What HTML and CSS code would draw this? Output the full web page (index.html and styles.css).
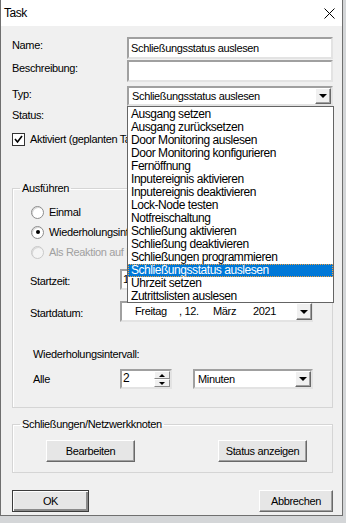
FILE: index.html
```html
<!DOCTYPE html>
<html lang="de">

<head>
    <meta charset="UTF-8">
    <title>Task</title>
    <link rel="stylesheet" href="styles.css">
</head>

<body>
    <div class="window">
        <div class="titlebar">
            <span class="title">Task</span>
            <svg class="close" width="11" height="11" viewBox="0 0 11 11">
                <path d="M0.5 0.5 L10.5 10.5 M10.5 0.5 L0.5 10.5" stroke="#000" stroke-width="1" fill="none"/>
            </svg>
        </div>

        <div class="content">
            <div class="field-row row-name">
                <span class="label">Name:</span>
                <div class="textbox">Schließungsstatus auslesen</div>
            </div>
            <div class="field-row row-desc">
                <span class="label">Beschreibung:</span>
                <div class="textbox"></div>
            </div>
            <div class="field-row row-type">
                <span class="label">Typ:</span>
                <div class="combo type-combo">
                    <span class="combo-text">Schließungsstatus auslesen</span>
                    <span class="arrow-btn"><i class="tri"></i></span>
                </div>
            </div>
            <div class="status">Status:</div>
            <div class="check-row">
                <span class="checkbox">
                    <svg width="9" height="9" viewBox="0 0 9 9"><path d="M1 4 L3.5 7 L8 1" stroke="#000" stroke-width="1.6" fill="none"/></svg>
                </span>
                <span>Aktiviert (geplanten Task ausführen)</span>
            </div>

            <fieldset class="group run">
                <legend>Ausführen</legend>
                <div class="group-body run-body">
                    <div class="radio-row first">
                        <span class="radio"></span>
                        <span>Einmal</span>
                    </div>
                    <div class="radio-row">
                        <span class="radio checked"><i></i></span>
                        <span>Wiederholungsintervall</span>
                    </div>
                    <div class="radio-row disabled">
                        <span class="radio"></span>
                        <span>Als Reaktion auf Ereignis</span>
                    </div>

                    <div class="pick-row start-time">
                        <span class="pick-label">Startzeit:</span>
                        <div class="picker">
                            <span class="pick-text">14:00:00</span>
                        </div>
                    </div>
                    <div class="pick-row start-date">
                        <span class="pick-label">Startdatum:</span>
                        <div class="picker">
                            <span class="d-day">Freitag</span>
                            <span class="d-num">, 12.</span>
                            <span class="d-month">März</span>
                            <span class="d-year">2021</span>
                            <span class="arrow-btn date-btn"><i class="tri"></i></span>
                        </div>
                    </div>

                    <div class="interval-title">Wiederholungsintervall:</div>
                    <div class="interval-row">
                        <span class="interval-label">Alle</span>
                        <div class="spinner">
                            <span class="spin-text">2</span>
                            <span class="spin-btns">
                                <span class="spin-btn"><i class="tri up"></i></span>
                                <span class="spin-btn"><i class="tri small"></i></span>
                            </span>
                        </div>
                        <div class="combo unit-combo">
                            <span class="combo-text">Minuten</span>
                            <span class="arrow-btn"><i class="tri"></i></span>
                        </div>
                    </div>
                </div>
            </fieldset>

            <fieldset class="group nodes">
                <legend>Schließungen/Netzwerkknoten</legend>
                <div class="group-body nodes-body">
                    <button class="btn">Bearbeiten</button>
                    <button class="btn">Status anzeigen</button>
                </div>
            </fieldset>

            <div class="footer">
                <button class="btn default ok">OK</button>
                <button class="btn cancel">Abbrechen</button>
            </div>
        </div>

        <ul class="droplist">
            <li>Ausgang setzen</li>
            <li>Ausgang zurücksetzen</li>
            <li>Door Monitoring auslesen</li>
            <li>Door Monitoring konfigurieren</li>
            <li>Fernöffnung</li>
            <li>Inputereignis aktivieren</li>
            <li>Inputereignis deaktivieren</li>
            <li>Lock-Node testen</li>
            <li>Notfreischaltung</li>
            <li>Schließung aktivieren</li>
            <li>Schließung deaktivieren</li>
            <li>Schließungen programmieren</li>
            <li class="selected">Schließungsstatus auslesen</li>
            <li>Uhrzeit setzen</li>
            <li>Zutrittslisten auslesen</li>
        </ul>
    </div>
</body>

</html>
```

FILE: styles.css
```css
* {
    box-sizing: border-box;
}

body {
    margin: 0;
    background: #d4d6d8;
    font-family: "Liberation Sans", Arial, sans-serif;
    font-size: 11px;
    letter-spacing: -0.35px;
    line-height: 13px;
    color: #000;
}

.window {
    position: relative;
    width: 343px;
    height: 516px;
    background: #f0f0f0;
    border-left: 1px solid #6f6f6f;
    border-right: 1px solid #6f6f6f;
    border-bottom: 1px solid #6f6f6f;
}

.titlebar {
    height: 26px;
    background: #fff;
    display: flex;
    align-items: center;
    justify-content: space-between;
    padding: 0 7px 0 3px;
}

.title {
    font-size: 12px;
    letter-spacing: -0.5px;
}

.close {
    display: block;
}

.content {
    padding: 11px 9px 0 11px;
}

.field-row {
    display: flex;
    align-items: flex-start;
}

.label {
    width: 115px;
    padding-top: 2px;
}

.row-desc {
    margin-top: 1px;
}

.row-type {
    margin-top: 4px;
}

.textbox {
    width: 206px;
    height: 22px;
    background: #fff;
    border: 2px solid;
    border-color: #a0a0a0 #e3e3e3 #e3e3e3 #a0a0a0;
    padding: 3px 2px 0;
    white-space: nowrap;
    overflow: hidden;
}

.combo {
    position: relative;
    display: flex;
    align-items: center;
    justify-content: space-between;
    background: #fff;
    border: 2px solid;
    border-color: #a0a0a0 #e3e3e3 #e3e3e3 #a0a0a0;
    padding-left: 3px;
}

.type-combo {
    width: 206px;
    height: 20px;
}

.arrow-btn {
    width: 16px;
    height: 16px;
    display: flex;
    align-items: center;
    justify-content: center;
    background: #f0f0f0;
    border: 1px solid;
    border-color: #fff #696969 #696969 #fff;
    box-shadow: inset -1px -1px 0 #a0a0a0;
}

.tri {
    width: 0;
    height: 0;
    border-left: 4px solid transparent;
    border-right: 4px solid transparent;
    border-top: 4px solid #000;
}

.tri.up {
    border-top: none;
    border-bottom: 3px solid #000;
    border-left-width: 3px;
    border-right-width: 3px;
}

.tri.small {
    border-top-width: 3px;
    border-left-width: 3px;
    border-right-width: 3px;
}

.status {
    margin-top: 3px;
    height: 13px;
}

.check-row {
    margin-top: 10px;
    height: 14px;
    display: flex;
    align-items: center;
    gap: 5px;
    white-space: nowrap;
}

.checkbox {
    width: 13px;
    height: 13px;
    background: #fff;
    border: 1px solid #333;
    display: flex;
    align-items: center;
    justify-content: center;
}

.group {
    margin: 0;
    padding: 0;
    border: 1px solid #d5d5d5;
    box-shadow: inset 1px 1px 0 #fff;
    min-width: 0;
}

.group legend {
    padding: 0 2px;
    margin-left: 7px;
    line-height: 13px;
}

.run {
    margin-top: 36px;
}

.run-body {
    padding: 0 0 18px 18px;
}

.radio-row {
    display: flex;
    align-items: center;
    gap: 5px;
    height: 14px;
    margin-top: 6px;
    white-space: nowrap;
}

.radio-row.first {
    margin-top: 10px;
}

.radio-row.disabled {
    color: #a0a0a0;
}

.radio {
    width: 13px;
    height: 13px;
    border-radius: 50%;
    background: #fff;
    border: 1px solid #8c8c8c;
    box-shadow: inset 1px 1px 0 #d8d8d8;
    display: flex;
    align-items: center;
    justify-content: center;
}

.disabled .radio {
    border-color: #c8c8c8;
    background: #f4f4f4;
}

.radio.checked i {
    width: 4px;
    height: 4px;
    border-radius: 50%;
    background: #000;
}

.pick-row {
    display: flex;
    align-items: center;
}

.start-time {
    margin-top: 10px;
}

.start-date {
    margin-top: 11px;
}

.pick-label {
    width: 90px;
    margin-left: -1px;
    padding-top: 3px;
}

.picker {
    position: relative;
    display: flex;
    align-items: center;
    width: 193px;
    height: 21px;
    background: #fff;
    border: 2px solid;
    border-color: #a0a0a0 #e3e3e3 #e3e3e3 #a0a0a0;
    padding-left: 1px;
    white-space: nowrap;
}

.d-day {
    margin-left: 12px;
    width: 44px;
}

.d-num {
    width: 34px;
}

.d-month {
    width: 40px;
}

.d-year {
    width: 38px;
}

.date-btn {
    margin-left: auto;
    margin-right: -1px;
    height: 17px;
}

.interval-title {
    margin-top: 26px;
    margin-left: 2px;
    height: 13px;
}

.interval-row {
    display: flex;
    align-items: center;
    margin-top: 8px;
}

.interval-label {
    width: 87px;
    margin-left: 2px;
    padding-top: 1px;
}

.spinner {
    display: flex;
    width: 52px;
    height: 20px;
    background: #fff;
    border: 2px solid;
    border-color: #a0a0a0 #e3e3e3 #e3e3e3 #a0a0a0;
}

.spin-text {
    flex: 1;
    padding: 1px 0 0 1px;
    font-size: 12px;
}

.spin-btns {
    display: flex;
    flex-direction: column;
    width: 16px;
}

.spin-btn {
    flex: 1;
    display: flex;
    align-items: center;
    justify-content: center;
    background: #f0f0f0;
    border: 1px solid;
    border-color: #fff #8a8a8a #8a8a8a #fff;
}

.unit-combo {
    margin-left: 21px;
    width: 120px;
    height: 20px;
}

.nodes {
    margin-top: 10px;
}

.nodes-body {
    display: flex;
    gap: 83px;
    padding: 9px 0 10px 33px;
}

.btn {
    font-family: inherit;
    font-size: 11px;
    letter-spacing: -0.35px;
    color: #000;
    height: 22px;
    width: 89px;
    padding: 0;
    background: #e6e6e6;
    border: 1px solid;
    border-color: #fff #696969 #696969 #fff;
    box-shadow: inset -1px -1px 0 #a0a0a0;
}

.footer {
    display: flex;
    justify-content: space-between;
    margin-top: 17px;
}

.ok {
    width: 77px;
    border: 1px solid #3c3c3c;
    box-shadow: inset 1px 1px 0 #fff, inset -2px -2px 0 #8a8a8a;
}

.cancel {
    width: 74px;
}

/* open drop-down list of the "Typ" combo box, lies over the dialog */
.droplist {
    position: absolute;
    left: 126px;
    top: 106px;
    width: 207px;
    height: 197px;
    margin: 0;
    padding: 1px 0 0;
    list-style: none;
    background: #fff;
    border: 1px solid #646464;
    font-size: 12px;
    letter-spacing: -0.45px;
}

.droplist li {
    height: 13px;
    line-height: 13px;
    padding-left: 3px;
    white-space: nowrap;
}

.droplist .selected {
    background: #0078d7;
    color: #fff;
    outline: 1px dotted #f0a040;
    outline-offset: -1px;
}
```
